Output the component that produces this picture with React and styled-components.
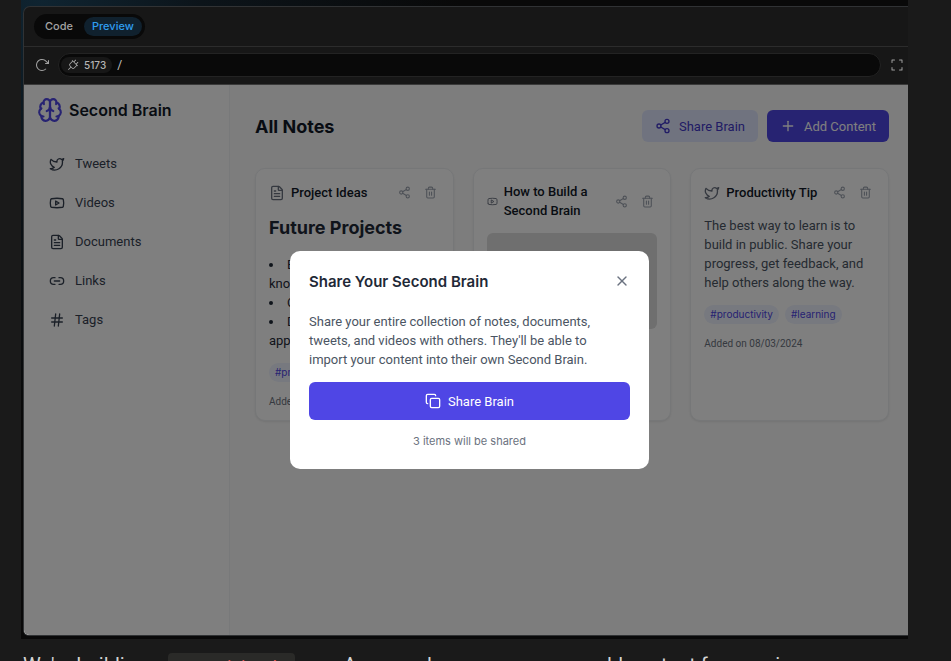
import React from "react";
import styled, { createGlobalStyle } from "styled-components";
import { Twitter, Youtube, FileText, Link2, Hash, Share2, Trash2, Plus, X, Copy } from "lucide-react";
import { PiArrowClockwise, PiPlug, PiCornersOut } from "react-icons/pi";

const GlobalStyle = createGlobalStyle`
  *, *::before, *::after { box-sizing: border-box; }
  html, body { margin: 0; height: 100%; overflow: hidden; }
  body { background: #1a1a1a; font-family: Roboto, "Liberation Sans", sans-serif; font-size: 13px; line-height: 19px; }
  h1, h2, h3, p, ul { margin: 0; padding: 0; }
  button, input { font: inherit; }
  button { border: 0; padding: 0; cursor: pointer; }
  a { color: inherit; text-decoration: none; }
  svg { flex: none; display: block; }
  #root { height: 100%; }
`;

const headingFont = `Inter, "Liberation Sans", sans-serif`;

const Page = styled.div`
  height: 100vh;
  overflow: hidden;
  padding: 0 43px 0 21px;
`;

const Backdrop = styled.div`
  padding: 6px 0 3px 2px;
  background: radial-gradient(circle at 20px 0, #0f2431 0, #0c141a 160px, #090909 420px);
`;

const Browser = styled.section`
  border: 1px solid #303234;
  border-right: 0;
  border-radius: 7px 0 0 6px;
  overflow: hidden;
  background: #171717;
`;

const TabBar = styled.div`
  display: flex;
  align-items: center;
  height: 40px;
  padding: 0 10px;
  border-bottom: 1px solid #2c2c2c;
`;

const TabGroup = styled.div`
  display: flex;
  gap: 3px;
  padding: 3px;
  border-radius: 13px;
  background: #090909;
`;

const Tab = styled.button`
  height: 19px;
  padding: 0 8px;
  border-radius: 10px;
  font-family: ${headingFont};
  font-size: 11px;
  font-weight: 500;
  color: ${(p) => (p.$active ? "#2f9df0" : "#a3a3a3")};
  background: ${(p) => (p.$active ? "#10212e" : "transparent")};
`;

const AddressBar = styled.div`
  display: flex;
  align-items: center;
  gap: 8px;
  height: 38px;
  padding: 0 3px 1px 10px;
  border-bottom: 1px solid #3a3a3a;
`;

const BarButton = styled.button`
  display: grid;
  place-items: center;
  width: 16px;
  height: 16px;
  background: none;
  color: #a0a0a0;
`;

const Address = styled.div`
  display: flex;
  flex: 1;
  align-items: center;
  gap: 5px;
  height: 24px;
  padding: 0 2px;
  border: 1px solid #232323;
  border-radius: 12px;
  background: #090909;
`;

const Port = styled.button`
  display: flex;
  align-items: center;
  gap: 5px;
  height: 16px;
  padding: 0 6px;
  border-radius: 8px;
  background: #171717;
  color: #b4b4b4;
  font-family: ${headingFont};
  font-size: 10px;
  font-weight: 500;
`;

const PathInput = styled.input`
  flex: 1;
  min-width: 0;
  border: 0;
  padding: 0;
  outline: 0;
  background: none;
  color: #c4c4c4;
  font-size: 12px;
`;

const Preview = styled.div`
  position: relative;
  display: grid;
  grid-template-columns: 206px 1fr;
  height: calc(100vh - 111px);
  background: #fafafa;
`;

const Sidebar = styled.aside`
  padding: 12px 13px;
  border-right: 1px solid #f1f2f4;
  background: #fff;
`;

const Brand = styled.div`
  display: flex;
  align-items: center;
  gap: 6px;
  height: 26px;
  color: #4f46e5;
`;

const BrandName = styled.h1`
  font-family: ${headingFont};
  font-size: 16px;
  font-weight: 600;
  color: #111827;
`;

const Nav = styled.nav`
  display: grid;
  grid-auto-rows: 39px;
  margin-top: 21px;
`;

const NavLink = styled.a`
  display: flex;
  align-items: center;
  gap: 10px;
  padding-left: 12px;
  color: #374151;
`;

const Main = styled.main`
  padding: 25px 19px 25px 25px;
`;

const Header = styled.header`
  display: flex;
  align-items: center;
  gap: 9px;
  margin-bottom: 26px;
`;

const Title = styled.h2`
  flex: 1;
  font-family: ${headingFont};
  font-size: 18px;
  font-weight: 700;
  color: #111827;
`;

const Button = styled.button`
  display: flex;
  align-items: center;
  justify-content: center;
  gap: ${(p) => (p.$block ? 7 : 8)}px;
  height: ${(p) => (p.$block ? 38 : 32)}px;
  width: ${(p) => (p.$block ? "100%" : "auto")};
  padding: 0 13px;
  border-radius: 6px;
  color: ${(p) => (p.$soft ? "#4338ca" : "#fff")};
  background: ${(p) => (p.$soft ? "#e0e7ff" : "#4f46e5")};
`;

const Cards = styled.div`
  display: grid;
  grid-template-columns: repeat(3, minmax(0, 1fr));
  gap: 19px;
`;

const Card = styled.article`
  display: flex;
  flex-direction: column;
  min-height: 253px;
  padding: 13px 13px 9px;
  border: 1px solid #eceef1;
  border-radius: 10px;
  background: #fff;
  box-shadow: 0 1px 2px rgba(0, 0, 0, 0.08);
`;

const CardHead = styled.div`
  display: flex;
  align-items: center;
  gap: 6px;
  min-height: 21px;
  margin-bottom: 13px;
  color: #6b7280;
`;

const CardTitle = styled.h3`
  flex: 1;
  font-size: 13px;
  font-weight: 500;
  color: #111827;
`;

const CardActions = styled.div`
  display: flex;
  gap: 13px;
  padding-right: 3px;
`;

const IconButton = styled.button`
  background: none;
  color: ${(p) => (p.$dark ? "#6b7280" : "#9ca3af")};
`;

const NoteHeading = styled.h2`
  margin-bottom: 15px;
  font-family: ${headingFont};
  font-size: 18px;
  line-height: 24px;
  font-weight: 700;
  color: #1f2937;
`;

const NoteList = styled.ul`
  list-style-position: inside;
  color: #1f2937;
`;

const Text = styled.p`
  color: #4b5563;
`;

const Thumb = styled.div`
  aspect-ratio: 16 / 9;
  border-radius: 6px;
  background: #dedede;
`;

const Tags = styled.div`
  display: flex;
  gap: 6px;
  margin-top: 13px;
`;

const Tag = styled.span`
  padding: 0 6px;
  border-radius: 10px;
  background: #eef2ff;
  color: #4f46e5;
  font-family: ${headingFont};
  font-size: 10px;
`;

const Added = styled.p`
  margin-top: 10px;
  font-size: 10px;
  color: #6b7280;
`;

const Overlay = styled.div`
  position: absolute;
  inset: 0;
  display: flex;
  align-items: center;
  justify-content: center;
  padding-left: 7px;
  background: rgba(0, 0, 0, 0.5);
`;

const Modal = styled.div`
  width: 359px;
  padding: 19px 19px 18px;
  border-radius: 10px;
  background: #fff;
`;

const ModalHead = styled.div`
  display: flex;
  align-items: center;
  justify-content: space-between;
  height: 22px;
  margin-bottom: 20px;
`;

const ModalTitle = styled.h2`
  font-family: ${headingFont};
  font-size: 15px;
  font-weight: 600;
  color: #1f2937;
`;

const ModalText = styled(Text)`
  margin-bottom: 13px;
  padding-right: 13px;
`;

const ModalNote = styled.p`
  margin-top: 12px;
  text-align: center;
  font-family: ${headingFont};
  font-size: 11px;
  color: #6b7280;
`;

const Article = styled.p`
  margin-top: 12px;
  padding-left: 2px;
  font-size: 20px;
  line-height: 28px;
  white-space: nowrap;
  color: #d4d4d4;
`;

const Code = styled.code`
  padding: 6px;
  border-radius: 4px;
  background: #2a2a28;
  color: #eb5757;
  font: 16px "Liberation Mono", monospace;
`;

const BrainIcon = () => (
  <svg width="26" height="26" viewBox="0 0 24 24" fill="none" stroke="currentColor" strokeWidth="2" strokeLinecap="round" strokeLinejoin="round" aria-hidden="true">
    <path d="M12 5a3 3 0 1 0-5.997.125 4 4 0 0 0-2.526 5.77 4 4 0 0 0 .556 6.588A4 4 0 1 0 12 18Z" />
    <path d="M12 5a3 3 0 1 1 5.997.125 4 4 0 0 1 2.526 5.77 4 4 0 0 1-.556 6.588A4 4 0 1 1 12 18Z" />
    <path d="M15 13a4.5 4.5 0 0 1-3-4 4.5 4.5 0 0 1-3 4" />
    <path d="M17.599 6.5a3 3 0 0 0 .399-1.375M6.003 5.125A3 3 0 0 0 6.401 6.5M3.477 10.896a4 4 0 0 1 .585-.396M19.938 10.5a4 4 0 0 1 .585.396M6 18a4 4 0 0 1-1.967-.516M19.967 17.484A4 4 0 0 1 18 18" />
  </svg>
);

const links = [
  ["Tweets", Twitter],
  ["Videos", Youtube],
  ["Documents", FileText],
  ["Links", Link2],
  ["Tags", Hash],
];

function Note({ icon: Icon, iconSize = 16, title, tags, date, children }) {
  return (
    <Card>
      <CardHead>
        <Icon size={iconSize} />
        <CardTitle>{title}</CardTitle>
        <CardActions>
          <IconButton aria-label={`Share ${title}`}><Share2 size={13} /></IconButton>
          <IconButton aria-label={`Delete ${title}`}><Trash2 size={13} /></IconButton>
        </CardActions>
      </CardHead>
      {children}
      <Tags>{tags.map((t) => <Tag key={t}>#{t}</Tag>)}</Tags>
      <Added>Added on {date}</Added>
    </Card>
  );
}

export default function App() {
  return (
    <Page>
      <GlobalStyle />
      <Backdrop>
        <Browser>
          <TabBar>
            <TabGroup>
              <Tab>Code</Tab>
              <Tab $active>Preview</Tab>
            </TabGroup>
          </TabBar>
          <AddressBar>
            <BarButton aria-label="Reload"><PiArrowClockwise size={16} /></BarButton>
            <Address>
              <Port><PiPlug size={12} />5173</Port>
              <PathInput aria-label="Path" defaultValue="/" />
            </Address>
            <BarButton aria-label="Full screen"><PiCornersOut size={16} /></BarButton>
          </AddressBar>
          <Preview>
            <Sidebar>
              <Brand><BrainIcon /><BrandName>Second Brain</BrandName></Brand>
              <Nav>
                {links.map(([label, Icon]) => (
                  <NavLink href="#" key={label}><Icon size={16} />{label}</NavLink>
                ))}
              </Nav>
            </Sidebar>
            <Main>
              <Header>
                <Title>All Notes</Title>
                <Button $soft><Share2 size={16} />Share Brain</Button>
                <Button><Plus size={16} />Add Content</Button>
              </Header>
              <Cards>
                <Note icon={FileText} title="Project Ideas" tags={["productivity", "ideas"]} date="10/03/2024">
                  <NoteHeading>Future Projects</NoteHeading>
                  <NoteList>
                    <li>Build a personal knowledge base</li>
                    <li>Create a habit tracker</li>
                    <li>Develop a mobile learning app</li>
                  </NoteList>
                </Note>
                <Note icon={Youtube} iconSize={11} title="How to Build a Second Brain" tags={["productivity"]} date="09/03/2024">
                  <Thumb />
                </Note>
                <Note icon={Twitter} title="Productivity Tip" tags={["productivity", "learning"]} date="08/03/2024">
                  <Text>The best way to learn is to build in public. Share your progress, get feedback, and help others along the way.</Text>
                </Note>
              </Cards>
            </Main>
            <Overlay>
              <Modal role="dialog" aria-labelledby="share-title">
                <ModalHead>
                  <ModalTitle id="share-title">Share Your Second Brain</ModalTitle>
                  <IconButton $dark aria-label="Close"><X size={16} /></IconButton>
                </ModalHead>
                <ModalText>Share your entire collection of notes, documents, tweets, and videos with others. They'll be able to import your content into their own Second Brain.</ModalText>
                <Button $block><Copy size={16} />Share Brain</Button>
                <ModalNote>3 items will be shared</ModalNote>
              </Modal>
            </Overlay>
          </Preview>
        </Browser>
      </Backdrop>
      <Article>We're building a <Code>second-brain</Code> app. As an end user, anyone can add content from various</Article>
    </Page>
  );
}
